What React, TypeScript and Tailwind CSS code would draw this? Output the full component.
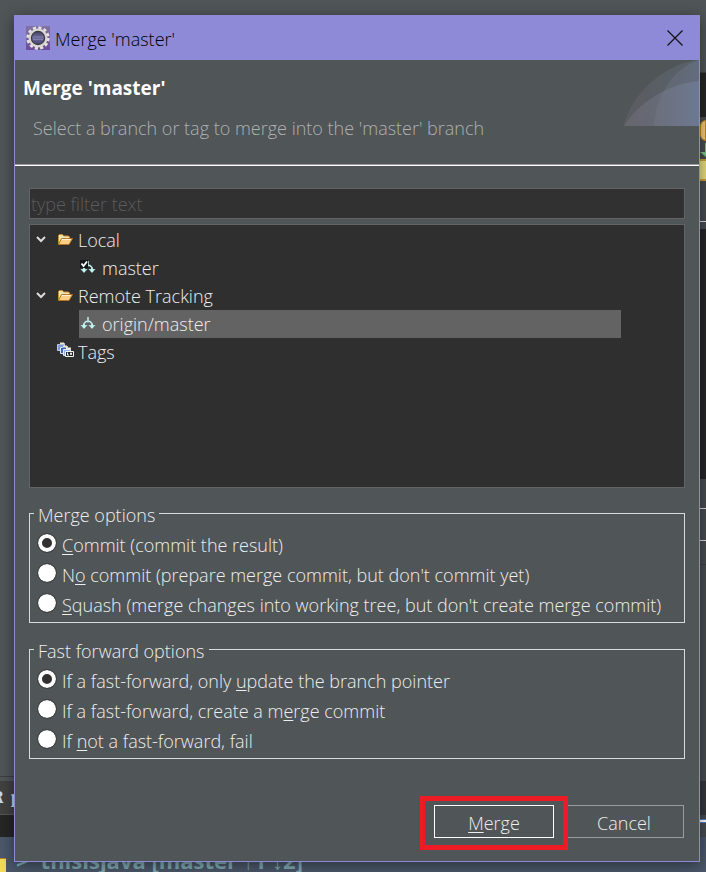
import { useState } from "react";
import type { ReactNode } from "react";
import { clsx } from "clsx";

type Option = {
  id: string;
  before: string;
  key: string;
  after: string;
};

const mergeOptions: Option[] = [
  { id: "commit", before: "", key: "C", after: "ommit (commit the result)" },
  { id: "no-commit", before: "N", key: "o", after: " commit (prepare merge commit, but don't commit yet)" },
  { id: "squash", before: "", key: "S", after: "quash (merge changes into working tree, but don't create merge commit)" },
];

const fastForwardOptions: Option[] = [
  { id: "ff-update", before: "If a fast-forward, only ", key: "u", after: "pdate the branch pointer" },
  { id: "ff-commit", before: "If a fast-forward, create a m", key: "e", after: "rge commit" },
  { id: "ff-fail", before: "If ", key: "n", after: "ot a fast-forward, fail" },
];

const GearIcon = () => (
  <svg width="24" height="24" viewBox="0 0 24 24" aria-hidden="true">
    <defs>
      <linearGradient id="gear-bg" x1="0" y1="0" x2="0" y2="1">
        <stop offset="0" stopColor="#8272a4" />
        <stop offset="1" stopColor="#6c4c9b" />
      </linearGradient>
      <linearGradient id="gear-core" x1="0" y1="0" x2="0" y2="1">
        <stop offset="0" stopColor="#3c3958" />
        <stop offset="0.5" stopColor="#6f6b9c" />
        <stop offset="1" stopColor="#3d3766" />
      </linearGradient>
    </defs>
    <rect width="24" height="24" fill="url(#gear-bg)" />
    <circle cx="12" cy="12" r="10" fill="none" stroke="#e4e2dc" strokeWidth="3.4" strokeDasharray="3 2.236" />
    <circle cx="12" cy="12" r="8" fill="url(#gear-core)" stroke="#d9d7d0" strokeWidth="3" />
    <circle cx="12" cy="12" r="6.6" fill="none" stroke="#3a3746" strokeWidth="1.2" />
    <path d="M7 11h10M7 13.5h10" stroke="#8985b4" strokeWidth="0.8" />
  </svg>
);

const FolderIcon = () => (
  <svg width="16" height="14" viewBox="0 0 16 14" aria-hidden="true">
    <path d="M1.5 11V2.5l1-1h3l1 1.5h5l1 1v2" fill="#fbe3b0" stroke="#c98c3b" />
    <path d="M1.5 11.5 4.5 5.5h11l-3.5 6z" fill="#fccf82" stroke="#b8742a" />
    <path d="M5 6.5h9" stroke="#fff0c8" />
  </svg>
);

const BranchIcon = ({ checked = false }: { checked?: boolean }) => (
  <svg className="ml-px" width="16" height="16" viewBox="0 0 16 16" aria-hidden="true">
    <path d="M8 1v4M4 11V7.5L6 5.5h4l2 2V11" fill="none" stroke="#c3efee" strokeWidth="1.5" />
    <path d="M.5 9h7L4 13zM8.500 9h7L12 13z" fill="#a8e4e4" />
    <path d="M4 8v4M12 8v4" stroke="#e6ffff" />
    {checked && (
      <>
        <rect x="0" y="0" width="8" height="8" fill="#15151c" />
        <path d="M1.5 3.5 3.5 6 7 1.5" fill="none" stroke="#fff" strokeWidth="1.8" />
      </>
    )}
  </svg>
);

const TagsIcon = () => (
  <svg className="-mt-1" width="17" height="16" viewBox="0 0 17 16" aria-hidden="true">
    <path d="M.5 2.5h2l1-1h4v7h-7z" fill="#7e9ad6" stroke="#b9cdf2" />
    <path d="M3 1.500h4" stroke="#f0e6c8" strokeWidth="2" />
    <path d="M3.500 5.500h2l1-1h4v7h-7z" fill="#3f64b5" stroke="#d8e5fa" />
    <path d="M6 4.500h4M9 6.500h5" stroke="#f0e6c8" strokeWidth="2" />
    <path d="M6.500 7.500h7v6h-7z" fill="#8fb0e6" stroke="#dfeafc" />
    <path d="M8.500 9.500h8v5h-8z" fill="#23262e" stroke="#f4f4ef" />
    <path d="M10.500 10.500v2.500h1.500M13.500 11h1v1.500h-1z" fill="none" stroke="#fff" strokeWidth="0.9" />
  </svg>
);

const Chevron = () => (
  <svg width="12" height="8" viewBox="0 0 12 8" aria-hidden="true">
    <path d="m2 1 4 4 4-4" fill="none" stroke="#dcdcdc" strokeWidth="2" />
  </svg>
);

const HeaderArt = () => (
  <svg className="absolute right-0 top-0" width="75" height="66" viewBox="0 0 75 66" aria-hidden="true">
    <defs>
      <linearGradient id="art" x1="0" y1="0" x2="1" y2="0">
        <stop offset="0" stopColor="#8d8494" />
        <stop offset="1" stopColor="#8aa0d0" />
      </linearGradient>
    </defs>
    <path d="M0 66C5 36 42 2 75 0v66z" fill="url(#art)" opacity="0.16" />
    <path d="M0 66C15 42 44 24 75 21v45z" fill="url(#art)" opacity="0.24" />
    <path d="M30 66C32 34 50 8 75 0v66z" fill="url(#art)" opacity="0.18" />
  </svg>
);

interface TreeRowProps {
  label: string;
  icon: ReactNode;
  expanded?: boolean;
  child?: boolean;
  selected?: boolean;
  onSelect: () => void;
}

const TreeRow = ({ label, icon, expanded, child, selected, onSelect }: TreeRowProps) => (
  <li role="treeitem" aria-selected={selected} aria-expanded={expanded} className={clsx("flex h-7 items-center", child && "pl-[49px] pr-[63px]")}>
    {!child && <span className="w-[27px] pl-[5px]">{expanded && <Chevron />}</span>}
    <button type="button" onClick={onSelect} className={clsx("flex h-7 flex-1 items-center text-left", selected && "bg-[#636363]")}>
      <span className={clsx("shrink-0", child ? "w-[23px]" : "w-[21px]")}>{icon}</span>
      {label}
    </button>
  </li>
);

interface OptionGroupProps {
  title: string;
  name: string;
  options: Option[];
}

const OptionGroup = ({ title, name, options }: OptionGroupProps) => {
  const [value, setValue] = useState(options[0].id);

  return (
    <fieldset className="border border-[#d8dadb] px-2 pb-[2px] pt-[3px]">
      <legend className="-ml-1 px-1 pt-1 leading-6">{title}</legend>
      {options.map((o) => (
        <div key={o.id} className="flex h-[30px] items-center gap-[6px]">
          <input
            type="radio"
            id={o.id}
            name={name}
            checked={value === o.id}
            onChange={() => setValue(o.id)}
            className="mb-[5px] size-[18px] shrink-0 appearance-none rounded-full bg-white outline outline-[#3c3f40] checked:border-4 checked:border-white checked:bg-[#303030]"
          />
          <label htmlFor={o.id} className="whitespace-nowrap">
            {o.before}
            <u className="underline-offset-2">{o.key}</u>
            {o.after}
          </label>
        </div>
      ))}
    </fieldset>
  );
};

const Workbench = () => (
  <div className="absolute inset-0 -z-10 flex flex-col overflow-hidden bg-[#505557]" aria-hidden="true">
    <div className="flex flex-1 justify-between">
      <div className="flex w-[14px] flex-col justify-end overflow-hidden">
        <div className="h-[5px] border-t border-[#3c3f40]" />
        <div className="flex h-[34px] items-center gap-[7px] border-b border-[#555] bg-[#414142] font-serif text-lg font-bold text-[#c9d9f0]">
          <span className="-ml-2">R</span>
          <span>p</span>
        </div>
        <div className="h-[22px] bg-[#262626]" />
      </div>
      <div className="flex w-[7px] flex-col bg-[#484c4d]">
        <div className="h-[72px] bg-[#505557]" />
        <div className="h-[45px] border-t border-[#3c3f40] bg-[#262626]" />
        <div className="flex h-[104px] flex-col gap-[2px] pl-px pt-[3px]">
          <div className="h-[21px] rounded-l-md border border-[#c98a1c] bg-[#f1cb80]" />
          <svg width="6" height="14" viewBox="0 0 6 14">
            <path d="M5 0v9H0l6 5V0z" fill="#79c489" />
          </svg>
          <div className="h-[22px] border-y-2 border-[#c99f34] bg-[#e8de7c]" />
        </div>
        <div className="h-2 border-t border-[#ddd]" />
        <div className="h-[250px] bg-[#262626]" />
        <div className="h-[29px]" />
        <div className="h-[33px] border-y border-[#ddd]" />
        <div className="h-6 border-b border-[#3c3f40]" />
        <div className="flex-1" />
        <div className="h-[34px] bg-[#363738]" />
        <div className="h-[22px] bg-[#484c4d] pt-1">
          <div className="h-1 border-y border-[#4f7fc0] bg-white" />
        </div>
      </div>
    </div>
    <div className="flex h-[35px] items-end bg-[#4b586a] text-[22px] font-bold leading-6 text-[#7fabb3]">
      <span className="h-[14px] w-[6px] shrink-0 border-t border-[#b98a14] bg-[#f2dc5c]" />
      <span className="pl-[10px]">&gt;</span>
      <span className="pl-3">thisisjava [master ↑1 ↓2]</span>
    </div>
  </div>
);

export default function App() {
  const [selected, setSelected] = useState("origin/master");
  const [filter, setFilter] = useState("");

  return (
    <main className="relative isolate flex min-h-screen flex-col pb-[10px] pl-[14px] pr-[6px] pt-[15px] font-['Open_Sans','Noto_Sans',sans-serif] text-lg leading-6 text-[#eee]">
      <Workbench />

      <section role="dialog" aria-labelledby="dialog-title" className="flex flex-1 flex-col border border-[#8f8ad8] bg-[#505557] font-[350] shadow-[0_3px_14px_rgba(0,0,0,0.45)]">
        <div className="flex h-11 items-center bg-[#8f8ad8] pl-[11px] pr-4 text-black">
          <GearIcon />
          <h1 id="dialog-title" className="flex-1 pl-[5px] pt-[2px]">Merge 'master'</h1>
          <button type="button" aria-label="Close">
            <svg width="16" height="16" viewBox="0 0 16 16">
              <path d="m.5.5 15 15m0-15-15 15" stroke="#111" strokeWidth="1.2" />
            </svg>
          </button>
        </div>

        <header className="relative h-[106px] border-b border-white pl-2 pt-4 shadow-[inset_0_-1px_#999]">
          <h2 className="text-[19px] font-bold leading-6 text-white">Merge 'master'</h2>
          <p className="pl-[10px] pt-4 text-[#aeb0b1]">Select a branch or tag to merge into the 'master' branch</p>
          <HeaderArt />
        </header>

        <div className="flex flex-1 flex-col px-[14px] pb-[23px] pt-[22px]">
          <input
            type="text"
            aria-label="Filter"
            placeholder="type filter text"
            value={filter}
            onChange={(e) => setFilter(e.target.value)}
            className="h-[31px] border border-[#636363] bg-[#313131] px-px placeholder:text-[#5b5b5b]"
          />

          <ul role="tree" className="mt-[5px] h-[264px] border border-[#636363] bg-[#2f2f2f] pt-px">
            <TreeRow label="Local" icon={<FolderIcon />} expanded selected={selected === "local"} onSelect={() => setSelected("local")} />
            <TreeRow label="master" icon={<BranchIcon checked />} child selected={selected === "master"} onSelect={() => setSelected("master")} />
            <TreeRow label="Remote Tracking" icon={<FolderIcon />} expanded selected={selected === "remote"} onSelect={() => setSelected("remote")} />
            <TreeRow label="origin/master" icon={<BranchIcon />} child selected={selected === "origin/master"} onSelect={() => setSelected("origin/master")} />
            <TreeRow label="Tags" icon={<TagsIcon />} selected={selected === "tags"} onSelect={() => setSelected("tags")} />
          </ul>

          <div className="flex flex-col gap-3 pt-[11px]">
            <OptionGroup title="Merge options" name="merge" options={mergeOptions} />
            <OptionGroup title="Fast forward options" name="fast-forward" options={fastForwardOptions} />
          </div>

          <div className="mr-px mt-auto flex justify-end gap-[10px]">
            <div className="relative">
              <button type="button" className="h-[33px] w-[120px] border border-white pt-[2px]">
                <u className="underline-offset-2">M</u>erge
              </button>
              <span className="pointer-events-none absolute -inset-x-[14px] -bottom-3 -top-[9px] z-10 border-[5px] border-[#ed1c24]" />
            </div>
            <button type="button" className="h-[33px] w-[120px] border border-[#999c9e] pt-[2px]">Cancel</button>
          </div>
        </div>
      </section>
    </main>
  );
}
